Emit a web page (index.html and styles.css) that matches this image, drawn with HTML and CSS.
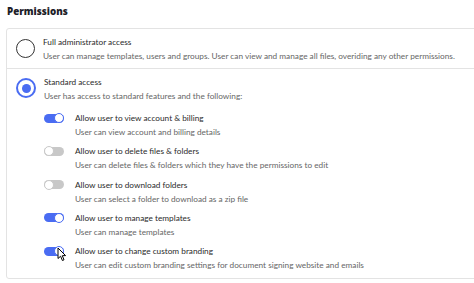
FILE: index.html
```
<!DOCTYPE html>
<html lang="en">
<head>
  <meta charset="UTF-8">
  <title>Permissions</title>
  <link rel="stylesheet" href="styles.css">
</head>
<body>
<h2 class="title">Permissions</h2>
<div class="card">
  <div class="option">
    <span class="radio"></span>
    <div class="text">
      <div class="name">Full administrator access</div>
      <div class="desc">User can manage templates, users and groups. User can view and manage all files, overiding any other permissions.</div>
    </div>
  </div>
  <div class="option">
    <span class="radio checked"></span>
    <div class="text">
      <div class="name">Standard access</div>
      <div class="desc">User has access to standard features and the following:</div>
      <ul class="perms">
        <li>
          <span class="toggle on"></span>
          <div>
            <div class="name">Allow user to view account &amp; billing</div>
            <div class="desc">User can view account and billing details</div>
          </div>
        </li>
        <li>
          <span class="toggle"></span>
          <div>
            <div class="name">Allow user to delete files &amp; folders</div>
            <div class="desc">User can delete files &amp; folders which they have the permissions to edit</div>
          </div>
        </li>
        <li>
          <span class="toggle"></span>
          <div>
            <div class="name">Allow user to download folders</div>
            <div class="desc">User can select a folder to download as a zip file</div>
          </div>
        </li>
        <li>
          <span class="toggle on"></span>
          <div>
            <div class="name">Allow user to manage templates</div>
            <div class="desc">User can manage templates</div>
          </div>
        </li>
        <li>
          <span class="toggle on">
            <svg class="cursor" width="10" height="15" viewBox="0 0 10 15"><path d="M1 1 L1 11.5 L3.6 9.2 L5.4 13.5 L7 12.8 L5.3 8.7 L8.6 8.6 Z" fill="#fff" stroke="#000" stroke-width="1" stroke-linejoin="round"/></svg>
          </span>
          <div>
            <div class="name">Allow user to change custom branding</div>
            <div class="desc">User can edit custom branding settings for document signing website and emails</div>
          </div>
        </li>
      </ul>
    </div>
  </div>
</div>
</body>
</html>
```
FILE: styles.css
```
body,div,ul,li,h2{margin:0;padding:0;}
ul{list-style-type:none;}
body{background:#fff;font:8.25px/14px Lato,Arial,sans-serif;color:#333;overflow:hidden;}
.title{font:800 9.75px/16px "Open Sans",Arial,sans-serif;color:#1c2027;padding:4px 0 0 7px;height:24px;}
.card{margin:0 -6px 0 6px;border:1px solid #e3e3e3;border-radius:3px;}
.option{display:flex;align-items:flex-start;gap:8px;padding:6px 9px 5px;}
.option + .option{border-top:1px solid #e3e3e3;padding-top:6px;padding-bottom:6px;}
.radio{flex:none;width:17px;height:17px;border:1.5px solid #333;border-radius:50%;margin-top:4px;position:relative;}
.radio.checked{border:2px solid #4a6cf2;width:16px;height:16px;margin-top:3px;}
.radio.checked:after{content:"";position:absolute;left:3.5px;top:3.5px;width:9px;height:9px;border-radius:50%;background:#4a6cf2;}
.name{color:#2a2a2a;}
.desc{color:#666;}
.perms{margin-top:8px;}
.perms li{display:flex;align-items:flex-start;gap:11px;}
.perms li + li{margin-top:5.25px;}
.toggle{flex:none;width:20px;height:9px;border-radius:5px;background:#c8c8c8;margin-top:2.5px;position:relative;}
.toggle:after{content:"";position:absolute;left:0;top:-0.5px;width:8px;height:8px;border-radius:50%;background:#fff;border:1px solid #c8c8c8;box-sizing:content-box;}
.toggle.on{background:#4a6cf2;}
.toggle.on:after{left:auto;right:0;border-color:#4a6cf2;}
.cursor{position:absolute;left:13px;top:0;z-index:2;}
```
